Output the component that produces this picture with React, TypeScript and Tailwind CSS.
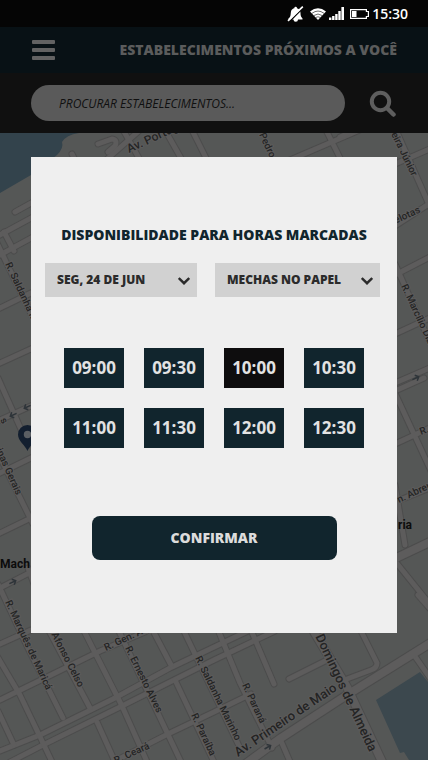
import { useState } from "react";

type Label = {
  text: string;
  x: number;
  y: number;
  angle: number;
  size: number;
  bold?: boolean;
};

const minorRoads = [
  "M0 644L31 630",
  "M0 700L100 651L145 632",
  "M0 751L40 735L113 699L170 668L250 630",
  "M10 762L43 745L118 708L214 660L275 631",
  "M113 762L170 733L214 712L251 694",
  "M-3 656L20 695L43 743L53 764",
  "M-2 711L14 745",
  "M-2 584L28 648L63 718",
  "M46 625L90 708",
  "M81 625L122 706L148 764",
  "M97 722L116 764",
  "M116 625L182 764",
  "M150 625L171 665",
  "M175 680L214 762",
  "M181 625L240 748",
  "M216 625L240 683L272 748",
  "M251 630L274 684",
  "M289 679L327 660",
  "M360 629L377 663Q377 668 371 670L347 679",
  "M281 741L291 764",
  "M414 655L432 681",
  "M418 595L432 611",
  "M98 144L112 139Q118 140 115 146L108 152",
  "M106 160L140 130",
  "M122 128L140 160",
  "M165 130L182 160",
  "M192 130L207 160",
  "M326 130L341 160",
  "M290 160L362 129",
  "M340 137L356 130",
  "M395 164L432 148",
  "M396 130L430 207",
  "M395 226L432 202",
  "M395 275L432 256",
  "M395 334L432 317",
  "M395 264L432 347",
  "M395 383L432 367",
  "M395 391L424 378",
  "M394 391L432 473",
  "M395 444L432 427",
  "M395 502L432 487",
  "M395 485L405 545",
  "M395 561L432 607",
  "M15 212L33 202",
  "M-2 236L33 217",
  "M-2 256L33 237",
  "M4 232L14 251",
  "M-3 243L33 318",
  "M-2 309L33 292",
  "M-2 364L33 348",
  "M-2 378L28 445",
  "M-2 421L33 405",
  "M-2 474L33 457",
  "M-2 534L33 517",
  "M-2 453L33 524",
  "M-2 589L33 571",
  "M28 568L34 584",
  "M72 154L76 162",
];

const majorRoads = [
  "M240 768L281 738L347 695L432 642",
  "M310 625L347 687L385 768",
  "M392 560L432 541",
];

const labels: Label[] = [
  { text: "Av. Portugal", x: 129, y: 153, angle: -25, size: 12 },
  { text: "R. Pedro", x: 254, y: 124, angle: 65, size: 10 },
  { text: "eira Júnior", x: 391, y: 134, angle: 64, size: 10 },
  { text: "Pelotas", x: 390, y: 226, angle: -24, size: 10 },
  { text: "R. Marcílio Dias", x: 401, y: 286, angle: 65, size: 10 },
  { text: "R. Saldanha M", x: 5, y: 264, angle: 65, size: 10 },
  { text: "s", x: 0, y: 420, angle: 60, size: 10 },
  { text: "inas Gerais", x: -4, y: 450, angle: 66, size: 10 },
  { text: "R. Marquês de Maricá", x: 5, y: 602, angle: 65, size: 10 },
  { text: "R. Afonso Celso", x: 46, y: 624, angle: 63, size: 10 },
  { text: "R. Gen. Argolo", x: 106, y: 651, angle: -25, size: 10 },
  { text: "R. Ernesto Alves", x: 125, y: 648, angle: 64, size: 10 },
  { text: "R. Saldanha Marinho", x: 195, y: 658, angle: 64, size: 10 },
  { text: "R. Paraíba", x: 191, y: 715, angle: 65, size: 10 },
  { text: "R. Ceará", x: 116, y: 764, angle: -25, size: 10 },
  { text: "R. Paraná", x: 242, y: 685, angle: 65, size: 10 },
  { text: "Av. Primeiro de Maio", x: 238, y: 757, angle: -34, size: 13 },
  { text: "R. Domingos de Almeida", x: 309, y: 623, angle: 65, size: 13 },
  { text: "R.", x: 421, y: 435, angle: -20, size: 10 },
  { text: "n. Abreu", x: 399, y: 503, angle: -25, size: 10 },
  { text: "Mach", x: 0, y: 568, angle: 0, size: 12, bold: true },
  { text: "ria", x: 398, y: 529, angle: 0, size: 12, bold: true },
];

const arrows = [
  { x: 13, y: 415, angle: 155 },
  { x: 27, y: 407, angle: 155 },
  { x: 13, y: 582, angle: -25 },
  { x: 268, y: 747, angle: -30 },
  { x: 416, y: 378, angle: -25 },
];

const slots = ["09:00", "09:30", "10:00", "10:30", "11:00", "11:30", "12:00", "12:30"];

function StreetMap() {
  return (
    <svg
      className="absolute inset-0 h-full w-full"
      viewBox="0 133 428 627"
      preserveAspectRatio="xMidYMin slice"
      aria-hidden="true"
    >
      <rect x="0" y="133" width="428" height="627" fill="#555756" />
      <path d="M0 133H79Q66 135 62 142Q64 148 57 155L31 175L0 193Z" fill="#33434c" />
      <path d="M376 700L420 672L428 682V760H409L404 752L400 753Z" fill="#3c484e" />
      <g fill="none" strokeLinecap="round" strokeLinejoin="round">
        {minorRoads.map((d) => (
          <path key={d} d={d} stroke="#4c4c4c" strokeWidth="7" />
        ))}
        {majorRoads.map((d) => (
          <path key={d} d={d} stroke="#4c4c4c" strokeWidth="10" />
        ))}
        {minorRoads.map((d) => (
          <path key={d} d={d} stroke="#5d5c5c" strokeWidth="5" />
        ))}
        {majorRoads.map((d) => (
          <path key={d} d={d} stroke="#5d5c5c" strokeWidth="8" />
        ))}
      </g>
      {arrows.map((a) => (
        <path
          key={`${a.x}-${a.y}`}
          d="M-4 0H3M0 -3L3 0L0 3"
          transform={`translate(${a.x} ${a.y}) rotate(${a.angle})`}
          fill="none"
          stroke="#2e3439"
          strokeWidth="1.5"
        />
      ))}
      <path
        d="M27.5 451C25 445 18 441 18 434.500A9.500 9.500 0 0 1 37 434.500C37 441 30 445 27.500 451Z"
        fill="#131f2f"
      />
      <circle cx="27.500" cy="434.500" r="3.700" fill="#5b5f63" />
      <g fontFamily="Roboto, sans-serif">
        {labels.map((l) => (
          <text
            key={l.text}
            transform={`translate(${l.x} ${l.y}) rotate(${l.angle})`}
            fontSize={l.size}
            fontWeight={l.bold ? 700 : 500}
            fill={l.bold ? "#0c0c0c" : "#242424"}
            stroke={l.bold ? "none" : "#5d5c5c"}
            strokeWidth="2"
            paintOrder="stroke"
          >
            {l.text}
          </text>
        ))}
      </g>
    </svg>
  );
}

function StatusBar() {
  return (
    <div className="flex h-[27px] items-center justify-end bg-[#050505] pr-5 text-white">
      <svg className="mr-[6px] h-4 w-[17px]" viewBox="0 0 17 16" aria-hidden="true">
        <path
          d="M1.500 12.500C4 11 3.500 8 4 5.500C4.500 3.200 6 2.500 7.300 2.200A1.300 1.300 0 0 1 10 2.200C12.500 3 13.500 4.800 13.500 7C13.500 9.500 14 11 15.500 12.500V13.500H1.500ZM6.500 13.500H11A2.200 2.200 0 0 1 6.500 13.500Z"
          fill="#fff"
        />
        <path d="M2.500 15.500L17 1" stroke="#050505" strokeWidth="1.500" />
        <path d="M1 14.800L15.800 .6" stroke="#fff" strokeWidth="1.700" />
      </svg>
      <svg className="mr-[3px] h-3 w-4" viewBox="0 0 16 12" aria-hidden="true">
        <path d="M0 3.500Q8 -3 16 3.500L8 12Z" fill="#fff" />
        <path
          d="M2 5.300Q8 .8 14 5.300M4 7.500Q8 4.500 12 7.500M5.800 9.500Q8 8 10.200 9.500"
          fill="none"
          stroke="#050505"
          strokeWidth=".6"
        />
      </svg>
      <svg className="mr-[6px] h-[13px] w-[15px]" viewBox="0 0 15 13" aria-hidden="true">
        <path
          d="M0 10.500h2.400V13H0zM3.100 9h2.400v4H3.100zM6.200 7h2.400v6H6.200zM9.300 4h2.400v9H9.300zM12.400 0H15v13h-2.600z"
          fill="#fff"
        />
      </svg>
      <svg className="mr-[3px] h-[10px] w-[19px]" viewBox="0 0 19 10" aria-hidden="true">
        <path d="M.6 .6H16.400V2.500H18.400V7.500H16.400V9.400H.6Z" fill="none" stroke="#fff" strokeWidth="1.200" />
        <path d="M2 2H6.500V8H2Z" fill="#fff" />
      </svg>
      <span className="text-sm leading-5 font-semibold">15:30</span>
    </div>
  );
}

function Picker({ label, value, className }: { label: string; value: string; className: string }) {
  return (
    <label className={`relative block ${className}`}>
      <select
        aria-label={label}
        className="h-[34px] w-full appearance-none bg-[#d1d1d1] pr-8 pl-3 text-xs font-extrabold text-[#2b2b2b] outline-none"
      >
        <option>{value}</option>
      </select>
      <svg
        className="pointer-events-none absolute top-[14px] right-[7px] h-2 w-3"
        viewBox="0 0 12 8"
        fill="none"
        stroke="#2b2b2b"
        strokeWidth="2.400"
        aria-hidden="true"
      >
        <path d="M.8 1L6 6.200L11.200 1" />
      </svg>
    </label>
  );
}

export default function App() {
  const [selected, setSelected] = useState("10:00");

  return (
    <div className="flex min-h-screen flex-col bg-[#555756] font-['Open_Sans',sans-serif]">
      <StatusBar />
      <header>
        <div className="flex h-[46px] items-center justify-between bg-[#081115] px-[31px]">
          <button type="button" aria-label="Menu" className="flex w-6 flex-col gap-1 pl-px">
            <span className="h-1 rounded-[1px] bg-[#626262]" />
            <span className="h-1 rounded-[1px] bg-[#626262]" />
            <span className="h-1 rounded-[1px] bg-[#626262]" />
          </button>
          <h1 className="text-sm leading-5 font-extrabold text-[#5b5c5c]">
            ESTABELECIMENTOS PRÓXIMOS A VOCÊ
          </h1>
        </div>
        <form className="flex h-[60px] items-center gap-6 bg-[#101010] px-[31px]">
          <input
            type="search"
            aria-label="Procurar estabelecimentos"
            placeholder="PROCURAR ESTABELECIMENTOS..."
            className="h-9 min-w-0 flex-1 rounded-full bg-[#5a5a5a] px-7 text-xs font-medium italic outline-none placeholder:text-[#101010]"
          />
          <button type="button" aria-label="Buscar" className="w-7">
            <svg className="h-7 w-7" viewBox="0 0 28 28" fill="none" stroke="#5e5e5e" aria-hidden="true">
              <circle cx="11.500" cy="12.500" r="8.700" strokeWidth="4" />
              <path d="M18 19L24.500 25.500" strokeWidth="4.500" strokeLinecap="round" />
            </svg>
          </button>
        </form>
      </header>

      <main className="relative flex-1 overflow-hidden px-[31px] pt-6 pb-8">
        <StreetMap />
        <section
          role="dialog"
          aria-labelledby="dialog-title"
          className="relative flex flex-col items-center bg-[#efefef] px-[14px] pt-[68px] pb-[73px]"
        >
          <h2 id="dialog-title" className="text-center text-sm leading-5 font-extrabold text-[#11252d]">
            DISPONIBILIDADE PARA HORAS MARCADAS
          </h2>
          <div className="mt-[18px] flex w-full gap-[18px] pr-[3px]">
            <Picker label="Data" value="SEG, 24 DE JUN" className="w-[152px] shrink-0" />
            <Picker label="Serviço" value="MECHAS NO PAPEL" className="min-w-0 flex-1" />
          </div>
          <div className="mt-[51px] grid grid-cols-4 gap-5">
            {slots.map((slot) => (
              <button
                key={slot}
                type="button"
                aria-pressed={slot === selected}
                onClick={() => setSelected(slot)}
                className={`h-10 w-[60px] text-[17px] font-bold text-[#e2e2e2] ${
                  slot === selected ? "bg-[#0e0d0e]" : "bg-[#11252d]"
                }`}
              >
                {slot}
              </button>
            ))}
          </div>
          <button
            type="button"
            className="mt-[68px] h-11 w-[245px] rounded-lg bg-[#11252d] text-sm font-extrabold text-[#dcdcdc]"
          >
            CONFIRMAR
          </button>
        </section>
      </main>
    </div>
  );
}
